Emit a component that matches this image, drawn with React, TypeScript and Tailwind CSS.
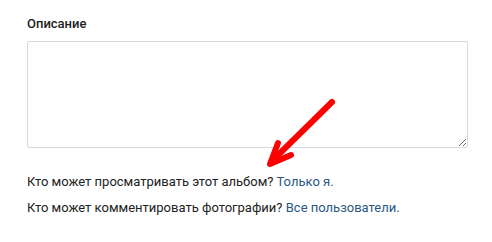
export default function App() {
  return (
    <div
      className="relative w-[492px] h-[242px] bg-white text-[13px] text-[#222]"
      style={{ fontFamily: 'Roboto, "Open Sans", sans-serif' }}
    >
      <div className="px-[27px] pt-[14px]">
        <div className="font-medium leading-[20px]">Описание</div>
        <textarea className="mt-[7px] block w-[441px] h-[107px] border border-[#d3d9de] rounded-[2px] resize-y outline-none" />
        <div className="mt-[25px] leading-[17px]">
          Кто может просматривать этот альбом?{' '}
          <span className="text-[#2a5885]">Только я.</span>
        </div>
        <div className="mt-[9px] leading-[17px]">
          Кто может комментировать фотографии?{' '}
          <span className="text-[#2a5885]">Все пользователи.</span>
        </div>
      </div>
      <svg className="absolute left-0 top-0 pointer-events-none" width="492" height="242">
        <g stroke="#ff0000" strokeWidth="6" strokeLinecap="round" strokeLinejoin="round" fill="none">
          <line x1="332" y1="102" x2="272" y2="161" />
          <polyline points="278,143 270,164 291,155" />
        </g>
      </svg>
    </div>
  );
}
